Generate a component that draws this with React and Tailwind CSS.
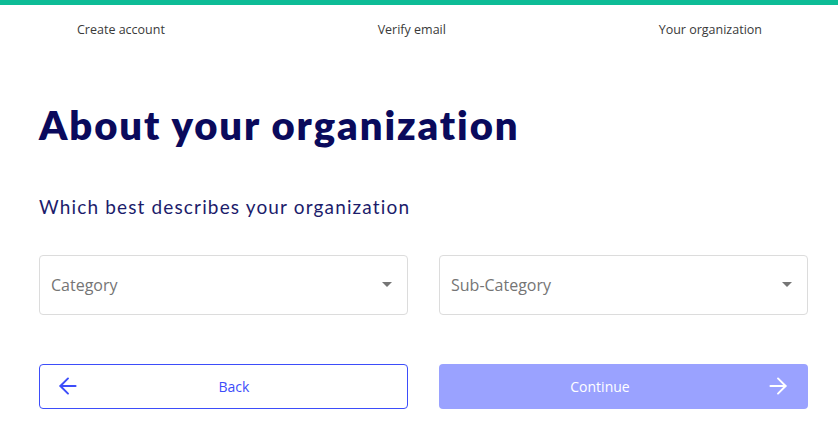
import { ArrowLeft, ArrowRight } from "lucide-react";

function SelectBox({ label }) {
  return (
    <div className="flex h-[60px] flex-1 items-center justify-between rounded border border-[#dcdcdc] bg-white pl-[11px] pr-[15px]">
      <span className="text-[16px] text-[#757575]">{label}</span>
      <span className="h-0 w-0 border-x-[5px] border-t-[5px] border-x-transparent border-t-[#757575]" />
    </div>
  );
}

export default function App() {
  return (
    <div
      className="min-h-[437px] w-full bg-white"
      style={{ fontFamily: '"Open Sans", "Liberation Sans", sans-serif' }}
    >
      {/* Progress bar */}
      <div className="h-[5px] w-full bg-[#0dbc96]" />

      {/* Steps */}
      <div className="flex justify-between pl-[77px] pr-[76px] pt-[16px] text-[12.5px] text-[#3a3a3a]">
        <span>Create account</span>
        <span>Verify email</span>
        <span>Your organization</span>
      </div>

      <div className="pl-[39px] pr-[30px]">
        <h1
          className="mt-[61px] text-[40px] leading-[48px] tracking-[1.9px] text-[#0a0a5c]"
          style={{ fontFamily: "Lato, 'Noto Sans', sans-serif", fontWeight: 800 }}
        >
          About your organization
        </h1>

        <p
          className="mt-[45px] text-[19px] leading-[26px] tracking-[1.15px] text-[#1c1c6b]"
          style={{ fontFamily: "Lato, 'Noto Sans', sans-serif" }}
        >
          Which best describes your organization
        </p>

        <div className="mt-[35px] flex gap-[31px]">
          <SelectBox label="Category" />
          <SelectBox label="Sub-Category" />
        </div>

        <div className="mt-[49px] flex gap-[31px]">
          <button className="flex h-[45px] flex-1 items-center rounded border border-[#3d4dfa] bg-white pl-[15px] pr-[20px] text-[14px] text-[#3d4dfa]">
            <ArrowLeft className="h-[26px] w-[26px] shrink-0" strokeWidth={1.8} />
            <span className="flex-1 text-center">Back</span>
          </button>
          <button className="flex h-[45px] flex-1 items-center rounded bg-[#9aa2ff] pl-[20px] pr-[17px] text-[14px] text-white">
            <span className="flex-1 pr-[24px] text-center">Continue</span>
            <ArrowRight className="h-[26px] w-[26px] shrink-0" strokeWidth={1.8} />
          </button>
        </div>
      </div>
    </div>
  );
}
